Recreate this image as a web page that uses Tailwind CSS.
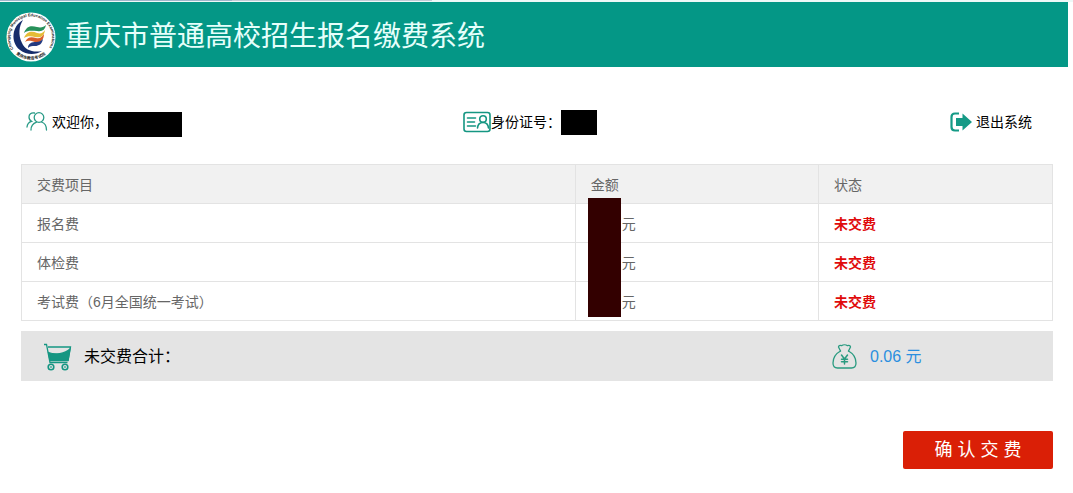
<!DOCTYPE html>
<html lang="zh-CN">
  <head>
    <meta charset="UTF-8" />
    <meta name="viewport" content="width=device-width, initial-scale=1.0" />
    <title>重庆市普通高校招生报名缴费系统</title>
    <script src="https://cdn.jsdelivr.net/npm/@tailwindcss/browser@4"></script>
  </head>
  <body class="bg-white text-sm text-black font-['Liberation_Sans','Noto_Sans_CJK_SC',sans-serif]">
    <div class="flex h-[2px] bg-[#eef8f7]">
      <div class="h-px w-[232px] bg-[#9fb6cb]"></div>
      <div class="h-px w-[200px] bg-[#c3cbd6]"></div>
    </div>

    <header class="mr-[5px] flex h-[65px] items-center gap-2 bg-[#049786] pt-1 pl-[5px]">
      <svg class="size-[52px] shrink-0" viewBox="0 0 52 52" aria-hidden="true">
        <defs>
          <path id="ringTop" d="M8.5 38 A21 21 0 1 1 43.5 38" />
          <path id="ringBottom" d="M11 43 A23 23 0 0 0 41 43" />
        </defs>
        <circle cx="26" cy="26" r="24.5" fill="#fff" />
        <text class="font-bold" font-size="4" fill="#222"><textPath href="#ringTop">Chongqing Municipal Education Examinations</textPath></text>
        <text class="font-bold" font-size="4" fill="#222"><textPath href="#ringBottom">重庆市教育考试院</textPath></text>
        <path d="M18 9C7 15 5 31 15 39c6 5 16 5 22 1-9 2-17-1-20-8-4-8-3-17 1-23z" fill="#152c6b" />
        <path d="M19 22c3-8 8-7 13-6 4 1 7 0 9-2-1 5-4 7-9 6-5 0-9-1-13 2z" fill="#27915a" />
        <path d="M19 27c3-7 8-7 13-5 4 1 6 0 8-3-1 7-5 8-10 7-4-1-8-1-11 1z" fill="#e5bd36" />
        <path d="M20 31c3-6 7-5 11-4 4 1 6-1 8-4 0 6-4 9-9 8-4-1-7-2-10 0z" fill="#d9602b" />
        <path d="M23 37c0-5 4-6 8-6 3 0 5-1 7-3-1 5-4 7-8 7-3 0-5 0-7 2z" fill="#233a80" />
      </svg>
      <h1 class="text-[28px] leading-9 font-normal text-[#e6fffb]">重庆市普通高校招生报名缴费系统</h1>
    </header>

    <main class="mr-5 ml-[21px] pt-[41px]">
      <div class="grid grid-cols-[437fr_487fr_103px] pl-[5px]">
        <div class="flex h-7 items-center">
          <svg class="mr-1 h-5 w-[22px] shrink-0" viewBox="0 0 22 20" fill="none" stroke="#2a9b87" stroke-width="1.3" stroke-linecap="round" aria-hidden="true">
            <circle cx="13" cy="5.5" r="4.8" />
            <path d="M5 18c0-4 2-6.5 5.500-7.800M15.500 10c3 1 5 4 5 8M8.500 1C5 .3 3 2.500 3 5c0 2 1 3.500 2.500 4.300C3 10 1.300 12 1 15" />
          </svg>
          <span>欢迎你，</span>
          <span class="mt-1 h-[25px] w-[74px] bg-black"></span>
        </div>
        <div class="flex h-7 items-center">
          <svg class="h-[22px] w-7 shrink-0" viewBox="0 0 28 22" fill="none" stroke="#159682" stroke-width="1.600" stroke-linecap="round" aria-hidden="true">
            <rect x="1" y="1.500" width="26" height="19" rx="2.500" />
            <path d="M4.500 7h8M4.500 11h7M4.500 15h8" />
            <circle cx="20" cy="8" r="3.300" />
            <path d="M14.500 17c.3-3.500 2-5.500 5.500-5.500s5.200 2 5.500 5.500" />
          </svg>
          <span>身份证号：</span>
          <span class="h-[25px] w-9 bg-black"></span>
        </div>
        <a href="#" class="flex h-7 items-center gap-1">
          <svg class="h-5 w-[22px] shrink-0" viewBox="0 0 22 20" aria-hidden="true">
            <path d="M9 1.500H5c-2.500 0-3.500 1-3.500 3.500v10c0 2.500 1 3.500 3.500 3.500h4" fill="none" stroke="#159a86" stroke-width="2.200" />
            <path d="M6 6h6.500V1.500L22 10l-9.500 8.500V14H6z" fill="#159a86" />
          </svg>
          <span>退出系统</span>
        </a>
      </div>

      <div class="mt-[28px]">
        <table class="w-full table-fixed border-collapse text-left text-[#666]">
          <thead class="bg-[#f1f1f1]">
            <tr class="h-[39px]">
              <th class="w-[53.7%] border border-[#e3e3e3] px-[15px] pt-[2px] font-normal">交费项目</th>
              <th class="w-[23.6%] border border-[#e3e3e3] px-[15px] pt-[2px] font-normal">金额</th>
              <th class="border border-[#e3e3e3] px-[15px] pt-[2px] font-normal">状态</th>
            </tr>
          </thead>
          <tbody>
            <tr class="h-[39px]">
              <td class="border border-[#e3e3e3] px-[15px] pt-[2px]">报名费</td>
              <td class="relative border border-[#e3e3e3] pt-[2px] pl-[46px]">
                <!-- covers the amounts of all three rows -->
                <div class="absolute -top-[6px] left-3 z-10 h-[119px] w-[33px] bg-[#330000]"></div>
                元
              </td>
              <td class="border border-[#e3e3e3] px-[15px] pt-[2px] font-bold text-[#e00b0b]">未交费</td>
            </tr>
            <tr class="h-[39px]">
              <td class="border border-[#e3e3e3] px-[15px] pt-[2px]">体检费</td>
              <td class="border border-[#e3e3e3] pt-[2px] pl-[46px]">元</td>
              <td class="border border-[#e3e3e3] px-[15px] pt-[2px] font-bold text-[#e00b0b]">未交费</td>
            </tr>
            <tr class="h-[39px]">
              <td class="border border-[#e3e3e3] px-[15px] pt-[2px]">考试费（6月全国统一考试）</td>
              <td class="border border-[#e3e3e3] pt-[2px] pl-[46px]">元</td>
              <td class="border border-[#e3e3e3] px-[15px] pt-[2px] font-bold text-[#e00b0b]">未交费</td>
            </tr>
          </tbody>
        </table>
      </div>

      <div class="mt-[10px] flex h-[50px] items-center justify-between bg-[#e4e4e4] pt-[2px] pl-[23px] text-base">
        <div class="flex items-center gap-3">
          <svg class="h-7 w-7 shrink-0" viewBox="0 0 28 28" fill="none" stroke="#159682" stroke-width="1.300" aria-hidden="true">
            <path d="M0 1.500h2.500L6 19.500h17.500M4 4h22.500L24 18" />
            <path d="M4.500 9.500C11 12 21 11 26 6l-2 11.500H6z" fill="#159682" />
            <circle cx="7" cy="24" r="2.800" stroke-width="1.600" />
            <circle cx="21" cy="24" r="2.800" stroke-width="1.600" />
            <path d="M6.300 24h1.400M20.300 24h1.400" />
          </svg>
          <span>未交费合计：</span>
        </div>
        <div class="flex w-[221px] items-center gap-[13px]">
          <svg class="h-[26px] w-[25px] shrink-0" viewBox="0 0 25 26" fill="none" stroke="#2a9b80" stroke-width="1.300" stroke-linejoin="round" stroke-linecap="round" aria-hidden="true">
            <path d="M8.500 7 6.500 3c0-1.500 1.500-2 3-1.300 1.500-1 4.500-1 6 0 1.500-.7 3-.2 3 1.300l-2 4" />
            <path d="M8.500 7C4 9.500 1 13.500 1 19c0 3.500 1.500 5 4.500 5h14c3 0 4.500-1.500 4.500-5 0-5.500-3-9.500-7.500-12" />
            <path d="M9.500 11l3 4 3-4M12.500 15v5M9.500 15.300h6M9.500 17.800h6" stroke-width="1.500" />
          </svg>
          <span class="text-[#2b8fdf]">0.06 元</span>
        </div>
      </div>

      <div class="mt-[50px] flex justify-end">
        <button type="button" class="h-[38px] w-[150px] rounded-xs bg-[#da1f06] text-lg text-white">确 认 交 费</button>
      </div>
    </main>
  </body>
</html>
